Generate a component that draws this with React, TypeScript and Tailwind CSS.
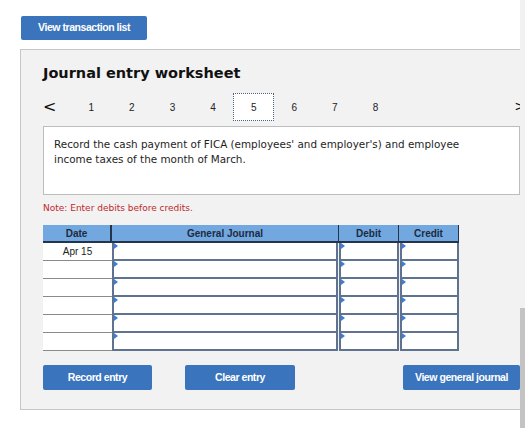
import React from "react";

const Tri = () => (
  <span className="absolute left-0 top-0 w-0 h-0 border-t-[3px] border-b-[3px] border-l-[4px] border-t-transparent border-b-transparent border-l-[#3b7dd8]" />
);

function InputCell({ w, first, gap }: { w: string; first: boolean; gap: boolean }) {
  return (
    <div
      className={`${w} h-[18px] border-x-2 border-b-2 ${first ? "border-t-0" : ""} ${gap ? "ml-px" : ""} border-[#5f7290] bg-white relative`}
    >
      <Tri />
    </div>
  );
}

export default function App() {
  const rows = ["Apr 15", "", "", "", "", ""];
  const nums = [1, 2, 3, 4, 5, 6, 7, 8];
  return (
    <div className="w-[525px] h-[428px] bg-white flex overflow-hidden">
      <div className="w-[520px] flex flex-col">
        <div className="pt-[16px] pl-[21px]">
          <button className="block w-[126px] h-[24px] bg-[#3a74bd] rounded-[2px] text-white text-[10.5px] font-bold tracking-[-0.45px] font-['Liberation_Sans',Arial,sans-serif]">
            View transaction list
          </button>
        </div>
        <div className="ml-[20px] mt-[9px] h-[361px] border border-r-0 border-[#c6c6c6] bg-[#f2f2f2] overflow-hidden relative pl-[22px]">
          <div className="pt-[13px] h-[38px] text-[14.5px] font-bold text-[#111] font-['DejaVu_Sans',Verdana,sans-serif] leading-[20px]">
            Journal entry worksheet
          </div>
          <div className="flex items-center h-[28px] mt-[5px] font-['Liberation_Sans',Arial,sans-serif] text-[10px] text-[#222]">
            <div className="w-[28px] text-[16px] leading-none font-['DejaVu_Sans',sans-serif] text-[#111]">&lt;</div>
            {nums.map((n) =>
              n === 5 ? (
                <div key={n} className="w-[40.6px] h-[28px] flex items-center justify-center bg-white border border-dotted border-[#4a5f80]">
                  {n}
                </div>
              ) : (
                <div key={n} className="w-[40.6px] h-[28px] flex items-center justify-center">
                  {n}
                </div>
              )
            )}
            <div className="absolute right-[-6px] top-[49px] text-[14px] leading-none font-['DejaVu_Sans',sans-serif] text-[#111]">&gt;</div>
          </div>
          <div className="mt-[5px] h-[69px] bg-white border border-[#bdbdbd] pl-[10px] pt-[10px] text-[10.4px] leading-[15px] text-[#1e1e1e] font-['DejaVu_Sans',Verdana,sans-serif]">
            <div>Record the cash payment of FICA (employees' and employer's) and employee</div>
            <div>income taxes of the month of March.</div>
          </div>
          <div className="mt-[6px] h-[14px] text-[9px] leading-[14px] text-[#c0282d] font-['DejaVu_Sans',Verdana,sans-serif]">
            Note: Enter debits before credits.
          </div>
          <div className="mt-[10px] w-[416px] font-['Liberation_Sans',Arial,sans-serif] text-[10px] text-[#222]">
            <div className="flex h-[18px] bg-[#72a7df] border-b-2 border-[#23344d] font-bold text-[#1d2b40]">
              <div className="w-[69px] flex items-center justify-center border-r-2 border-[#23344d]">Date</div>
              <div className="w-[227px] flex items-center justify-center border-r border-[#23344d]">General Journal</div>
              <div className="w-[60px] flex items-center justify-center border-r border-[#23344d]">Debit</div>
              <div className="w-[60px] flex items-center justify-center border-r border-[#23344d]">Credit</div>
            </div>
            {rows.map((d, i) => (
              <div key={i} className="flex">
                <div className="w-[69px] h-[18px] bg-white border-b border-[#8a8a8a] flex items-center justify-center">
                  {d}
                </div>
                <InputCell w="w-[226px]" first={i === 0} gap={false} />
                <InputCell w="w-[60px]" first={i === 0} gap={true} />
                <InputCell w="w-[59px]" first={i === 0} gap={true} />
              </div>
            ))}
          </div>
          <div className="flex mt-[14px] h-[25px] font-['Liberation_Sans',Arial,sans-serif] text-[10.5px] font-bold tracking-[-0.45px] text-white">
            <button className="block w-[109px] h-[25px] bg-[#3a74bd] rounded-[2px]">Record entry</button>
            <button className="block w-[110px] h-[25px] bg-[#3a74bd] rounded-[2px] ml-[33px]">Clear entry</button>
            <button className="block w-[117px] h-[25px] bg-[#3a74bd] rounded-[2px] ml-[108px]">View general journal</button>
          </div>
        </div>
      </div>
      <div className="w-[5px] flex flex-col">
        <div className="h-[308px] bg-[#f1f1f1]" />
        <div className="flex-1 bg-[#c3c3c3]" />
      </div>
    </div>
  );
}
